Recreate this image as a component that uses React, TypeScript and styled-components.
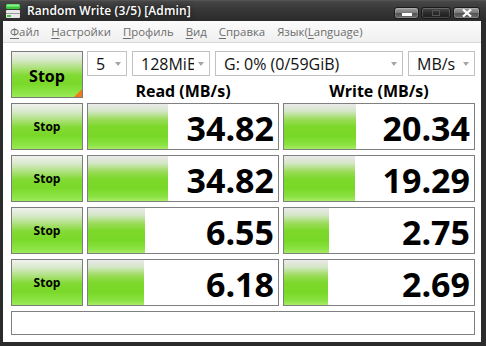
import React from "react";
import styled, { createGlobalStyle } from "styled-components";

const Global = createGlobalStyle`
  html, body { margin: 0; padding: 0; background: #fff; overflow: hidden; }
  body { font-family: "Open Sans", "Noto Sans", sans-serif; }
  * { box-sizing: border-box; }
`;

const Window = styled.div`
  width: 486px;
  height: 346px;
  display: flex;
  flex-direction: column;
  background: #2b2b2b;
`;

const TitleBar = styled.div`
  height: 21px;
  flex: none;
  display: flex;
  align-items: center;
  padding: 0 6px 0 5px;
  background: linear-gradient(#606060 0, #474747 1px, #383838 45%, #2a2a2a 100%);
`;

const Title = styled.div`
  margin-left: 6px;
  color: #fff;
  font-size: 12px;
  font-weight: 600;
  letter-spacing: 0.1px;
  text-shadow: 0 0 5px rgba(0, 0, 0, 0.7);
`;

const Controls = styled.div`
  margin-left: auto;
  display: flex;
  gap: 2px;
  align-self: flex-start;
  margin-top: 7px;
`;

const CtlButton = styled.div<{ $w: number; $dim?: boolean }>`
  width: ${(p) => p.$w}px;
  height: 12px;
  border: 1px solid #1a1a1a;
  border-radius: 3px;
  display: flex;
  align-items: center;
  justify-content: center;
  background: ${(p) =>
    p.$dim
      ? "linear-gradient(#4a4a4a, #2a2a2a 50%, #1c1c1c)"
      : "linear-gradient(#a0a0a0, #7a7a7a 45%, #545454 55%, #6a6a6a)"};
  box-shadow: inset 0 0 0 1px rgba(255, 255, 255, 0.18);
`;

const Frame = styled.div`
  flex: 1;
  display: flex;
  flex-direction: column;
  margin: 0 5px 4px 3px;
  background: #fff;
`;

const MenuBar = styled.div`
  height: 22px;
  flex: none;
  display: flex;
  align-items: center;
  padding-left: 1px;
  background: linear-gradient(#fbfbfb, #f0f0f0);
  border-bottom: 1px solid #d8d8d8;
`;

const MenuItem = styled.div`
  padding: 0 6px;
  font-size: 11.4px;
  color: #6d6d6d;
  white-space: nowrap;
  u { text-decoration-thickness: 1px; text-underline-offset: 2px; }
`;

const Content = styled.div`
  display: grid;
  grid-template-columns: 72px 192px 192px;
  grid-template-rows: repeat(5, 47px) 24px;
  column-gap: 4px;
  row-gap: 5px;
  padding: 8px 0 0 8px;
`;

const StopButton = styled.div<{ $big?: boolean }>`
  position: relative;
  border: 1px solid #7b7b7b;
  display: flex;
  align-items: center;
  justify-content: center;
  font-weight: 700;
  font-size: ${(p) => (p.$big ? 16 : 12)}px;
  padding-top: ${(p) => (p.$big ? 2 : 0)}px;
  color: #000;
  background: linear-gradient(
    #f0f2ee 0%,
    #d6e9c8 18%,
    #a6e070 38%,
    #82da34 52%,
    #7ad82a 70%,
    #8ce444 90%,
    #9cea58 100%
  );
  ${(p) =>
    p.$big
      ? `&::after {
    content: "";
    position: absolute;
    right: 0;
    bottom: 0;
    border-style: solid;
    border-width: 0 0 8px 8px;
    border-color: transparent transparent #f07a18 transparent;
  }`
      : ""}
`;

const TopPanel = styled.div`
  grid-column: 2 / 4;
  display: grid;
  grid-template-columns: 192px 192px;
  grid-template-rows: 25px 22px;
  column-gap: 4px;
`;

const ComboRow = styled.div`
  grid-column: 1 / 3;
  display: flex;
  gap: 5px;
`;

const Combo = styled.div<{ $w: number }>`
  width: ${(p) => p.$w}px;
  height: 25px;
  border: 1px solid #c2c2c2;
  background: #fff;
  display: flex;
  align-items: center;
  padding-left: 8px;
  font-size: 16px;
  color: #111;
`;

const ComboValue = styled.span`
  flex: 1;
  overflow: hidden;
  white-space: nowrap;
`;

const Arrow = styled.span`
  width: 15px;
  flex: none;
  display: flex;
  justify-content: flex-start;
  padding-left: 4px;
  &::before {
    content: "";
    border-style: solid;
    border-width: 4px 3.5px 0 3.5px;
    border-color: #a6a6a6 transparent transparent transparent;
  }
`;

const Header = styled.div`
  display: flex;
  justify-content: center;
  align-items: center;
  padding-top: 8px;
  font-size: 16px;
  font-weight: 700;
  color: #000;
`;

const ResultBox = styled.div`
  position: relative;
  border: 1px solid #808080;
  background: #fff;
  display: flex;
  align-items: center;
  justify-content: flex-end;
  padding: 2px 4px 0 0;
  overflow: hidden;
`;

const Bar = styled.div`
  position: absolute;
  left: 0;
  top: 0;
  bottom: 0;
  background: linear-gradient(
    #eaeaea 0%,
    #d4e6c6 16%,
    #9cdc5c 34%,
    #7dd82c 50%,
    #78d826 72%,
    #8ae242 90%,
    #a8ec66 100%
  );
`;

const Value = styled.span`
  position: relative;
  font-size: 34px;
  font-weight: 700;
  line-height: 1;
  color: #000;
`;

const Comment = styled.div`
  grid-column: 1 / 4;
  border: 1px solid #808080;
  background: #fff;
`;

const AppIcon = () => (
  <svg width="16" height="16" viewBox="0 0 16 16">
    <rect x="1" y="1" width="14" height="5" rx="1.5" fill="#3cc83c" />
    <rect x="1.5" y="1.5" width="13" height="2" rx="1" fill="#8ef08e" />
    <rect x="1" y="7" width="14" height="8" rx="1" fill="#e8e8e8" />
    <rect x="1" y="10" width="14" height="1" fill="#9a9a9a" />
    <rect x="2" y="12" width="4" height="2" fill="#46c046" />
  </svg>
);

const menu: [string, string][] = [
  ["Ф", "айл"],
  ["Н", "астройки"],
  ["П", "рофиль"],
  ["В", "ид"],
  ["С", "правка"],
];

const rows = [
  { read: "34.82", rw: 80, write: "20.34", ww: 72 },
  { read: "34.82", rw: 80, write: "19.29", ww: 71 },
  { read: "6.55", rw: 57, write: "2.75", ww: 45 },
  { read: "6.18", rw: 56, write: "2.69", ww: 44 },
];

export default function App() {
  return (
    <>
      <Global />
      <Window>
        <TitleBar>
          <AppIcon />
          <Title>Random Write (3/5) [Admin]</Title>
          <Controls>
            <CtlButton $w={25}>
              <svg width="10" height="4" viewBox="0 0 10 4" style={{ marginTop: 4 }}>
                <rect width="10" height="3" fill="#fff" />
              </svg>
            </CtlButton>
            <CtlButton $w={30} $dim>
              <svg width="8" height="6" viewBox="0 0 8 6">
                <rect x="0.5" y="0.5" width="7" height="5" fill="none" stroke="#555" />
              </svg>
            </CtlButton>
            <CtlButton $w={27}>
              <svg width="10" height="8" viewBox="0 0 10 8">
                <path d="M1 0.5 L9 7.5 M9 0.5 L1 7.5" stroke="#fff" strokeWidth="2.2" />
              </svg>
            </CtlButton>
          </Controls>
        </TitleBar>
        <Frame>
          <MenuBar>
            {menu.map(([u, rest]) => (
              <MenuItem key={u}>
                <u>{u}</u>
                {rest}
              </MenuItem>
            ))}
            <MenuItem>
              Язык(<u>L</u>anguage)
            </MenuItem>
          </MenuBar>
          <Content>
            <StopButton $big>Stop</StopButton>
            <TopPanel>
              <ComboRow>
                <Combo $w={40}>
                  <ComboValue>5</ComboValue>
                  <Arrow />
                </Combo>
                <Combo $w={78}>
                  <ComboValue>128MiB</ComboValue>
                  <Arrow />
                </Combo>
                <Combo $w={188}>
                  <ComboValue>G: 0% (0/59GiB)</ComboValue>
                  <Arrow />
                </Combo>
                <Combo $w={67}>
                  <ComboValue>MB/s</ComboValue>
                  <Arrow />
                </Combo>
              </ComboRow>
              <Header>Read (MB/s)</Header>
              <Header>Write (MB/s)</Header>
            </TopPanel>
            {rows.map((r, i) => (
              <React.Fragment key={i}>
                <StopButton>Stop</StopButton>
                <ResultBox>
                  <Bar style={{ width: r.rw }} />
                  <Value>{r.read}</Value>
                </ResultBox>
                <ResultBox>
                  <Bar style={{ width: r.ww }} />
                  <Value>{r.write}</Value>
                </ResultBox>
              </React.Fragment>
            ))}
            <Comment />
          </Content>
        </Frame>
      </Window>
    </>
  );
}
